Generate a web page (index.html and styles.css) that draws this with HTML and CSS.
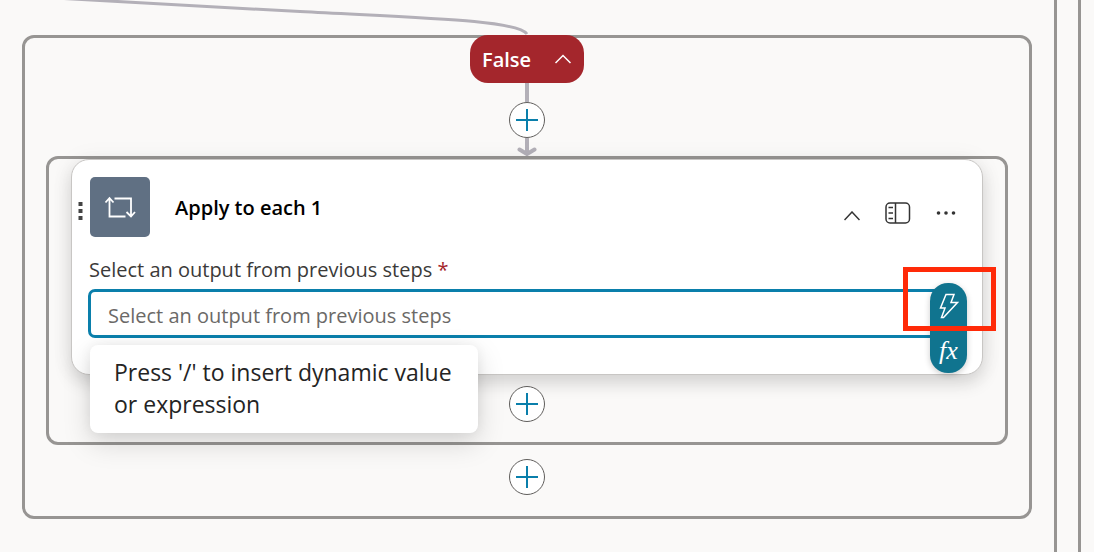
FILE: index.html
```html
<!DOCTYPE html>
<html lang="en">
<head>
<meta charset="utf-8">
<title>Flow designer</title>
<link rel="stylesheet" href="styles.css">
</head>
<body>
<main class="frame frame-outer">
  <div class="frame frame-inner">
    <svg class="edge-in" width="530" height="36" viewBox="0 0 530 36" aria-hidden="true"><path d="M64 -1.500C120 2 215 7 300 11.500C420 18 517 20 527 34"/></svg>
    <section class="scope">
      <button class="branch" type="button">False
        <svg width="16" height="10" viewBox="0 0 16 10" aria-hidden="true"><path d="M.5 9 8 1.500 15.500 9"/></svg>
      </button>
      <div class="line"></div>
      <button class="add" type="button" aria-label="Add step"><svg width="22" height="22" viewBox="0 0 22 22"><path d="M11 0v22M0 11h22"/></svg></button>
      <svg class="arrow" width="20" height="18" viewBox="0 0 20 18" aria-hidden="true"><path d="M10 0v16M2.500 11.500 10 16 17.500 11.500"/></svg>

      <section class="scope scope-inner">
        <article class="card">
          <header class="card-head">
            <svg class="grip" width="5" height="18" viewBox="0 0 5 18" aria-hidden="true"><path d="M.5 0h4v4h-4zM.5 7h4v4h-4zM.5 14h4v4h-4z"/></svg>
            <div class="loop"><svg width="32" height="22" viewBox="0 0 32 22" aria-hidden="true"><path d="M1.500 6.500 5.500 2 9.500 6.500M5.500 2v18.500H21.500M10.500 2.500H27V20M22.500 16 27 20.500 31 16"/></svg></div>
            <h1 class="title">Apply to each 1</h1>
            <div class="tools">
              <button class="tool tool-low" type="button" aria-label="Collapse"><svg width="16" height="10" viewBox="0 0 16 10"><path d="M.5 9 8 1 15.500 9"/></svg></button>
              <button class="tool" type="button" aria-label="Open panel"><svg width="26" height="22" viewBox="0 0 26 22"><rect x="1" y="1" width="23.500" height="20" rx="4"/><path d="M10.500 1v20M3.500 5.500h4.500M3.500 11h4.500M3.500 16.500h4.500"/></svg></button>
              <button class="tool" type="button" aria-label="More"><svg class="dots" width="20" height="4" viewBox="0 0 20 4"><circle cx="2.500" cy="2" r="1.800"/><circle cx="10" cy="2" r="1.800"/><circle cx="17.500" cy="2" r="1.800"/></svg></button>
            </div>
          </header>
          <label class="label" for="output">Select an output from previous steps <span class="required">*</span></label>
          <div class="field">
            <input class="input" id="output" type="text" placeholder="Select an output from previous steps">
            <div class="pill">
              <button class="pill-btn" type="button" aria-label="Dynamic content"><svg width="20" height="26" viewBox="0 0 20 26"><path d="M7 1.500H15L12 9.500H18.500L4.500 24.500H2.500L6 15H1.500Z"/></svg></button>
              <button class="pill-btn fx" type="button">fx</button>
            </div>
            <div class="highlight"></div>
            <div class="tooltip" role="tooltip">Press '/' to insert dynamic value or expression</div>
          </div>
        </article>
        <button class="add add-in" type="button" aria-label="Add step"><svg width="22" height="22" viewBox="0 0 22 22"><path d="M11 0v22M0 11h22"/></svg></button>
      </section>
      <button class="add add-after" type="button" aria-label="Add step"><svg width="22" height="22" viewBox="0 0 22 22"><path d="M11 0v22M0 11h22"/></svg></button>
    </section>
  </div>
</main>
</body>
</html>
```
FILE: styles.css
```css
* { box-sizing: border-box; }
body {
  margin: 0;
  background: #faf9f8;
  color: #242424;
  font-family: "Open Sans", "Noto Sans", sans-serif;
  font-size: 20px;
}
button { padding: 0; border: 0; background: none; font: inherit; color: inherit; cursor: pointer; }
svg { display: block; fill: none; }
.frame { border-right: 3px solid #979593; }
.frame-outer { min-height: 100vh; margin-right: 13px; padding-right: 21px; display: flex; }
.frame-inner { position: relative; flex: 1; padding: 35px 22px 33px; }
.edge-in { position: absolute; top: 0; left: 0; stroke: #b3b0b8; stroke-width: 3; }
.scope {
  display: flex;
  flex-direction: column;
  align-items: center;
  padding: 0 21px 21px;
  border: 3px solid #979593;
  border-radius: 12px;
}
.scope-inner { align-self: stretch; padding: 0 22px 20px; }
.branch {
  position: relative;
  display: flex;
  align-items: center;
  justify-content: space-between;
  width: 114px;
  height: 48px;
  margin-top: -3px;
  padding: 0 13px 0 12px;
  border-radius: 18px;
  background: #a4262c;
  color: #fff;
  font-weight: 600;
}
.branch svg { stroke: #fff; stroke-width: 1.5; }
.line { width: 4px; height: 19px; background: #b3b0b8; }
.add {
  display: flex;
  align-items: center;
  justify-content: center;
  width: 36px;
  height: 36px;
  border: 1px solid #605e5c;
  border-radius: 50%;
  background: #fff;
}
.add svg { stroke: #0a7fab; stroke-width: 2; }
.add-in { margin-top: 11px; }
.add-after { margin-top: 14px; }
.arrow { stroke: #b3b0b8; stroke-width: 4; stroke-linecap: round; stroke-linejoin: round; }
.card {
  align-self: stretch;
  padding: 17px 15px 36px 16px;
  border: 1px solid #c8c6c4;
  border-radius: 18px;
  background: #fff;
  box-shadow: 0 8px 18px rgba(0, 0, 0, .14), 0 0 24px rgba(0, 0, 0, .05);
}
.card-head { display: flex; align-items: center; margin-left: -10px; }
.grip { fill: #444; margin-top: 8px; }
.loop {
  display: flex;
  align-items: center;
  justify-content: center;
  width: 60px;
  height: 60px;
  margin-left: 7px;
  border-radius: 5px;
  background: #607083;
}
.loop svg { stroke: #fff; stroke-width: 1.8; }
.title { flex: 1; margin: 2px 0 0 25px; color: #000; font-size: 20px; font-weight: 600; line-height: 28px; }
.tools { display: flex; align-items: center; gap: 25px; margin: 12px 11px 0 0; }
.tool svg { stroke: #333; stroke-width: 1.5; }
.tool-low { padding-top: 6px; }
.tool .dots { fill: #333; stroke: none; }
.label { display: block; margin: 18px 0 5px 1px; line-height: 29px; color: #3b3a39; }
.required { color: #a4262c; }
.field { position: relative; padding-right: 18px; }
.input {
  display: block;
  width: 100%;
  height: 49px;
  padding: 4px 17px 0;
  border: 3px solid #0a7fab;
  border-radius: 7px;
  outline: 0;
  background: #fff;
  color: #242424;
  font: inherit;
}
.input::placeholder { color: #6b6967; opacity: 1; }
.pill {
  position: absolute;
  top: -6px;
  right: 0;
  width: 37px;
  overflow: hidden;
  border-radius: 18px;
  background: #10748f;
  color: #fff;
  box-shadow: 0 2px 6px rgba(0, 0, 0, .2);
}
.pill-btn { display: flex; align-items: center; justify-content: center; width: 100%; height: 45px; }
.pill-btn svg { stroke: #fff; stroke-width: 1.5; }
.fx { font: italic 26px/45px "Liberation Serif", serif; }
.highlight { position: absolute; top: -22px; right: -29px; width: 93px; height: 64px; border: 5px solid #ff2a08; pointer-events: none; }
.tooltip {
  position: absolute;
  top: 56px;
  left: 2px;
  width: 388px;
  padding: 11px 24px 13px;
  border-radius: 8px;
  background: #fff;
  font-size: 23px;
  line-height: 32px;
  box-shadow: 0 10px 28px rgba(0, 0, 0, .15), 0 0 12px rgba(0, 0, 0, .06);
}
```
